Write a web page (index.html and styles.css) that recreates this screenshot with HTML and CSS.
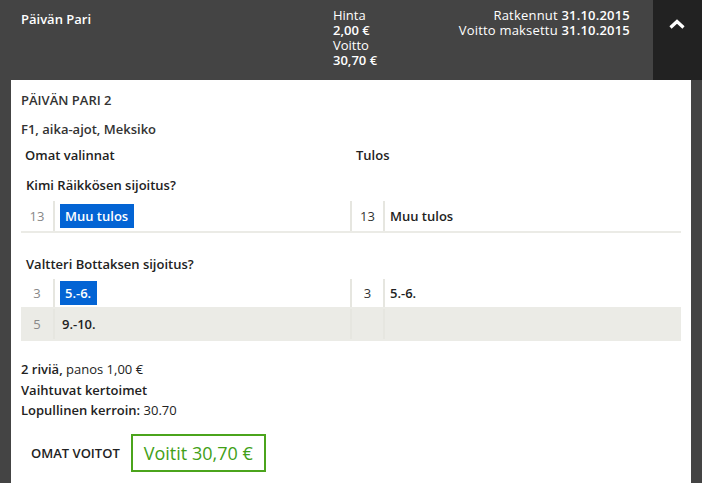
FILE: index.html
```html
<!DOCTYPE html>
<html lang="fi">
<head>
<meta charset="utf-8">
<title>Päivän Pari</title>
<link rel="stylesheet" href="styles.css">
</head>
<body>
<header class="top">
  <div class="title">Päivän Pari</div>
  <div class="amounts">
    <div>Hinta</div>
    <div class="b">2,00 €</div>
    <div>Voitto</div>
    <div class="b">30,70 €</div>
  </div>
  <div class="dates">
    <div>Ratkennut <b>31.10.2015</b></div>
    <div>Voitto maksettu <b>31.10.2015</b></div>
  </div>
  <div class="toggle">
    <svg class="chev" width="16" height="10" viewBox="0 0 16 10"><polyline points="1.5,8.5 8,2.5 14.5,8.5" fill="none" stroke="#fff" stroke-width="3.2"/></svg>
  </div>
</header>
<main class="panel">
  <h2 class="h-game">PÄIVÄN PARI 2</h2>
  <h3 class="h-event">F1, aika-ajot, Meksiko</h3>
  <div class="cols">
    <span class="col-l">Omat valinnat</span>
    <span class="col-r">Tulos</span>
  </div>

  <div class="q">Kimi Räikkösen sijoitus?</div>
  <div class="tbl">
    <div class="row">
      <div class="half left"><span class="num">13</span><span class="val"><span class="badge">Muu tulos</span></span></div>
      <div class="half right"><span class="num">13</span><span class="val">Muu tulos</span></div>
    </div>
  </div>

  <div class="q q2">Valtteri Bottaksen sijoitus?</div>
  <div class="tbl tbl2">
    <div class="row short">
      <div class="half left"><span class="num">3</span><span class="val"><span class="badge">5.-6.</span></span></div>
      <div class="half right"><span class="num">3</span><span class="val">5.-6.</span></div>
    </div>
    <div class="row alt">
      <div class="half left"><span class="num">5</span><span class="val plain">9.-10.</span></div>
      <div class="half right"><span class="num"></span><span class="val"></span></div>
    </div>
  </div>

  <div class="summary">
    <div><b>2 riviä,</b> panos 1,00 €</div>
    <div><b>Vaihtuvat kertoimet</b></div>
    <div><b>Lopullinen kerroin:</b> 30.70</div>
  </div>

  <div class="wins">
    <span class="wins-label">OMAT VOITOT</span>
    <span class="wins-box">Voitit 30,70 €</span>
  </div>
</main>
</body>
</html>
```
FILE: styles.css
```css
html, body {
  margin: 0;
  padding: 0;
}
body {
  background: #444444;
  font-family: "Open Sans", Lato, "Liberation Sans", sans-serif;
  font-size: 13px;
  color: #222;
  height: 483px;
  overflow: hidden;
}
b {
  font-weight: 600;
}
.top {
  display: flex;
  height: 80px;
  background: #444444;
  color: #fff;
  line-height: 15px;
}
.title {
  width: 312px;
  padding: 12px 0 0 21px;
  font-weight: 600;
}
.amounts {
  padding-top: 8px;
}
.amounts .b {
  font-weight: 600;
}
.dates {
  flex: 1;
  text-align: right;
  padding: 8px 23px 0 0;
  letter-spacing: 0.2px;
}
.toggle {
  width: 49px;
  background: #222222;
  display: flex;
  justify-content: center;
  align-items: flex-start;
}
.chev {
  margin-top: 19px;
  margin-left: -2px;
}
.panel {
  margin: 0 11px;
  background: #fff;
  padding: 11px 10px 0;
  line-height: 18px;
  height: 392px;
}
.h-game, .h-event {
  margin: 0;
  font-size: 13px;
  font-weight: 600;
  color: #333;
}
.h-event {
  margin-top: 11px;
}
.cols {
  display: flex;
  margin-top: 8px;
  font-weight: 600;
}
.col-l {
  width: 331px;
  padding-left: 4px;
}
.q {
  margin-top: 12px;
  padding-left: 5px;
  font-weight: 600;
}
.q2 {
  margin-top: 22px;
}
.tbl {
  margin-top: 7px;
}
.tbl2 {
  margin-top: 6px;
}
.row {
  display: flex;
  border-bottom: 2px solid #ebebe6;
}
.row.alt {
  background: #ebebe6;
}
.half {
  display: flex;
  height: 30px;
}
.row.short .half {
  height: 28px;
}
.half.left {
  width: 329px;
}
.half.right {
  flex: 1;
  border-left: 2px solid #e6e6e0;
}
.num {
  width: 32px;
  border-right: 2px solid #e6e6e0;
  color: #888;
  text-align: center;
  display: flex;
  align-items: center;
  justify-content: center;
  flex: none;
}
.right .num {
  width: 31px;
  color: #333;
}
.val {
  display: flex;
  align-items: center;
  padding-left: 5px;
  font-weight: 600;
}
.val.plain {
  padding-left: 7px;
}
.badge {
  background: #0364d4;
  color: #fff;
  padding: 3px 6px 3px 5px;
  line-height: 18px;
}
.summary {
  margin-top: 18px;
  line-height: 20.5px;
}
.wins {
  display: flex;
  align-items: center;
  margin-top: 13px;
  padding-left: 10px;
}
.wins-label {
  font-weight: 600;
  margin-right: 11px;
}
.wins-box {
  border: 2px solid #4ba41c;
  color: #42a017;
  font-size: 18px;
  line-height: 34px;
  padding: 0 11px;
  white-space: nowrap;
}
```
